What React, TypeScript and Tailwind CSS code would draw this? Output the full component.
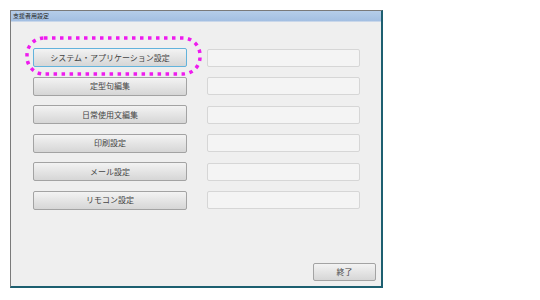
const rows = ["システム・アプリケーション設定", "定型句編集", "日常使用文編集", "印刷設定", "メール設定", "リモコン設定"];

const font = { fontFamily: '"Noto Sans CJK JP", "Noto Sans", sans-serif' };

const App = () => {
	return (
		<div className="w-[540px] h-[300px] bg-white pt-[10px] pl-[10px]" style={font}>
			<div className="relative w-[373px] h-[278px] flex flex-col border-l border-t border-[#7a7a7a] border-r-2 border-b-2 border-r-[#1d5f70] border-b-[#1d5f70] bg-[#efefef]">
				<div className="h-[11px] bg-gradient-to-b from-[#b5cde9] to-[#a3bfe2] border-b border-[#c9d7ea] flex items-center pl-[2px]">
					<span className="text-[6px] leading-none text-[#222]">支援者用設定</span>
				</div>
				<div className="flex flex-col gap-[9.6px] pl-[22px] pt-[26px]">
					{rows.map((label, i) => (
						<div key={label} className="flex items-center gap-[20px]">
							<div
								className={
									i === 0
										? "w-[154px] h-[19px] flex items-center justify-center rounded-[2px] border border-[#62b3dc] bg-gradient-to-b from-[#f3f3f3] to-[#d6d6d6] text-[8px] text-[#444]"
										: "w-[154px] h-[19px] flex items-center justify-center rounded-[2px] border border-[#a3a3a3] bg-gradient-to-b from-[#f3f3f3] to-[#d6d6d6] text-[8px] text-[#444]"
								}>
								{label}
							</div>
							<div className="w-[153px] h-[18px] rounded-[2px] border border-[#d6d6d6] bg-[#f4f4f4]" />
						</div>
					))}
				</div>
				<div className="flex-1" />
				<div className="flex justify-end pr-[5px] pb-[5px]">
					<div className="w-[63px] h-[18px] flex items-center justify-center rounded-[2px] border border-[#a3a3a3] bg-gradient-to-b from-[#f3f3f3] to-[#d6d6d6] text-[8px] text-[#444]">
						終了
					</div>
				</div>
				<svg className="absolute left-[14px] top-[25px]" width="177" height="40" viewBox="0 0 177 40">
					<rect x="2" y="2" width="173" height="36" rx="17" ry="17" fill="none" stroke="#ee1cee" strokeWidth="3.5" strokeDasharray="3.5 4.5" />
				</svg>
			</div>
		</div>
	);
};

export default App;
